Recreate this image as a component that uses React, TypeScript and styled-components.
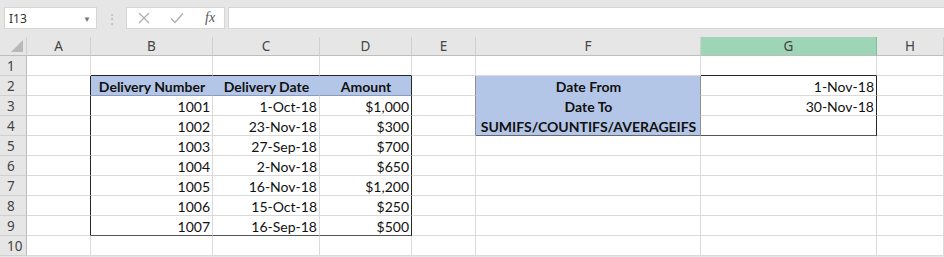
import React from "react";
import styled, { createGlobalStyle } from "styled-components";

const Global = createGlobalStyle`
  html, body { margin: 0; padding: 0; background: #e6e6e6; }
  body { font-family: "Lato", "Noto Sans", sans-serif; }
`;

const Page = styled.div`
  width: 944px;
  height: 257px;
  overflow: hidden;
  background: #e6e6e6;
  display: flex;
  flex-direction: column;
`;

const FormulaRow = styled.div`
  display: flex;
  align-items: stretch;
  height: 22px;
  margin-top: 7px;
  padding-left: 4px;
`;

const NameBox = styled.div`
  width: 93px;
  background: #fff;
  border: 1px solid #d6d6d6;
  box-sizing: border-box;
  display: flex;
  align-items: center;
  justify-content: space-between;
  padding: 0 5px 0 4px;
  font-family: "Noto Sans", sans-serif;
  font-size: 12px;
  color: #333;
`;

const Caret = styled.span`
  font-size: 8px;
  color: #777;
`;

const Grip = styled.div`
  width: 29px;
  display: flex;
  align-items: center;
  justify-content: center;
  color: #b5b5b5;
  font-size: 12px;
`;

const FxBox = styled.div`
  width: 99px;
  background: #fff;
  border: 1px solid #d6d6d6;
  box-sizing: border-box;
  display: flex;
  align-items: center;
  padding-left: 10px;
  gap: 18px;
`;

const FxLabel = styled.span`
  font-family: "Liberation Serif", serif;
  font-style: italic;
  font-size: 14px;
  color: #555;
  margin-left: 2px;
`;

const FormulaInput = styled.div`
  flex: 1;
  margin-left: 3px;
  background: #fff;
  border: 1px solid #d6d6d6;
  border-right: none;
  box-sizing: border-box;
`;

const Sheet = styled.div`
  margin-top: 8px;
  display: grid;
  grid-template-columns: 27px 64px 122px 107px 92px 64px 225px 176px 67px;
  grid-template-rows: 19px repeat(10, 20px);
  background: #fff;
`;

const Corner = styled.div`
  background: #e6e6e6;
  border-right: 1px solid #cfcfcf;
  border-bottom: 1px solid #bdbdbd;
  box-sizing: border-box;
  position: relative;
  &::after {
    content: "";
    position: absolute;
    right: 3px;
    bottom: 3px;
    border-style: solid;
    border-width: 0 0 12px 12px;
    border-color: transparent transparent #b8b8b8 transparent;
  }
`;

const ColHead = styled.div<{ $active?: boolean }>`
  background: ${(p) => (p.$active ? "#9fd5b7" : "#e6e6e6")};
  border-right: 1px solid ${(p) => (p.$active ? "#7fbf9a" : "#d0d0d0")};
  border-bottom: 1px solid #bdbdbd;
  box-sizing: border-box;
  display: flex;
  align-items: center;
  justify-content: center;
  font-family: "Noto Sans", sans-serif;
  font-size: 13.5px;
  color: #444;
`;

const RowHead = styled.div`
  background: #e6e6e6;
  border-right: 1px solid #bdbdbd;
  border-bottom: 1px solid #d0d0d0;
  box-sizing: border-box;
  display: flex;
  align-items: center;
  padding: 1px 0 0 7px;
  font-family: "Noto Sans", sans-serif;
  font-size: 13.5px;
  color: #444;
`;

const Cell = styled.div<{
  $fill?: string;
  $right?: string;
  $bottom?: string;
  $align?: "left" | "center" | "right";
  $bold?: boolean;
}>`
  background: ${(p) => p.$fill || "#fff"};
  border-right: 1px solid ${(p) => p.$right || "#dadada"};
  border-bottom: 1px solid ${(p) => p.$bottom || "#dadada"};
  box-sizing: border-box;
  display: flex;
  align-items: center;
  justify-content: ${(p) =>
    p.$align === "center" ? "center" : p.$align === "left" ? "flex-start" : "flex-end"};
  padding: 2px 2px 0 3px;
  font-family: "Lato", "Noto Sans", sans-serif;
  font-size: 14px;
  font-weight: ${(p) => (p.$bold ? 700 : 400)};
  color: #111;
  white-space: nowrap;
`;

const cols = ["A", "B", "C", "D", "E", "F", "G", "H"];
const BLUE = "#b4c6e7";
const DARK = "#262626";

type CellSpec = {
  text?: string;
  fill?: string;
  right?: string;
  bottom?: string;
  align?: "left" | "center" | "right";
  bold?: boolean;
};

const tableData = [
  ["1001", "1-Oct-18", "$1,000"],
  ["1002", "23-Nov-18", "$300"],
  ["1003", "27-Sep-18", "$700"],
  ["1004", "2-Nov-18", "$650"],
  ["1005", "16-Nov-18", "$1,200"],
  ["1006", "15-Oct-18", "$250"],
  ["1007", "16-Sep-18", "$500"],
];

function spec(row: number, col: number): CellSpec {
  const s: CellSpec = {};
  const c = cols[col];
  const inTable = c === "B" || c === "C" || c === "D";
  if (row === 1 && inTable) s.bottom = DARK;
  if (row === 1 && c === "G") s.bottom = DARK;
  if (row >= 2 && row <= 9 && c === "A") s.right = DARK;
  if (row >= 2 && row <= 9 && c === "D") s.right = DARK;
  if (row === 9 && inTable) s.bottom = "#555";
  if (row === 2 && inTable) {
    s.fill = BLUE;
    s.bold = true;
    s.align = "center";
    if (c !== "D") s.right = BLUE;
    s.bottom = "#8a9bbb";
    s.text = c === "B" ? "Delivery Number" : c === "C" ? "Delivery Date" : "Amount";
  }
  if (row >= 3 && row <= 9 && inTable) {
    s.text = tableData[row - 3][col - 1];
    s.align = "right";
  }
  if (row >= 2 && row <= 4 && c === "E") s.right = "#8f8f8f";
  if (row >= 2 && row <= 4 && c === "F") {
    s.fill = BLUE;
    s.bold = true;
    s.align = "center";
    s.right = "#8f8f8f";
    s.bottom = row === 4 ? "#6b6b6b" : BLUE;
    s.text = row === 2 ? "Date From" : row === 3 ? "Date To" : "SUMIFS/COUNTIFS/AVERAGEIFS";
  }
  if (row >= 2 && row <= 4 && c === "G") {
    s.right = DARK;
    s.align = "right";
    if (row === 4) s.bottom = "#555";
    if (row === 2) s.text = "1-Nov-18";
    if (row === 3) s.text = "30-Nov-18";
  }
  return s;
}

export default function App() {
  const rows = Array.from({ length: 10 }, (_, i) => i + 1);
  return (
    <Page>
      <Global />
      <FormulaRow>
        <NameBox>
          <span>I13</span>
          <Caret>▼</Caret>
        </NameBox>
        <Grip>⋮</Grip>
        <FxBox>
          <svg width="14" height="14" viewBox="0 0 14 14">
            <path d="M2 2 L12 12 M12 2 L2 12" stroke="#b0b0b0" strokeWidth="1.3" fill="none" />
          </svg>
          <svg width="16" height="14" viewBox="0 0 16 14">
            <path d="M2 7.5 L6 11.5 L14 2.5" stroke="#b0b0b0" strokeWidth="1.4" fill="none" />
          </svg>
          <FxLabel>fx</FxLabel>
        </FxBox>
        <FormulaInput />
      </FormulaRow>
      <Sheet>
        <Corner />
        {cols.map((c) => (
          <ColHead key={c} $active={c === "G"}>
            {c}
          </ColHead>
        ))}
        {rows.map((r) => (
          <React.Fragment key={r}>
            <RowHead>{r}</RowHead>
            {cols.map((c, ci) => {
              const s = spec(r, ci);
              return (
                <Cell
                  key={c}
                  $fill={s.fill}
                  $right={s.right}
                  $bottom={s.bottom}
                  $align={s.align}
                  $bold={s.bold}
                >
                  {s.text}
                </Cell>
              );
            })}
          </React.Fragment>
        ))}
      </Sheet>
    </Page>
  );
}
